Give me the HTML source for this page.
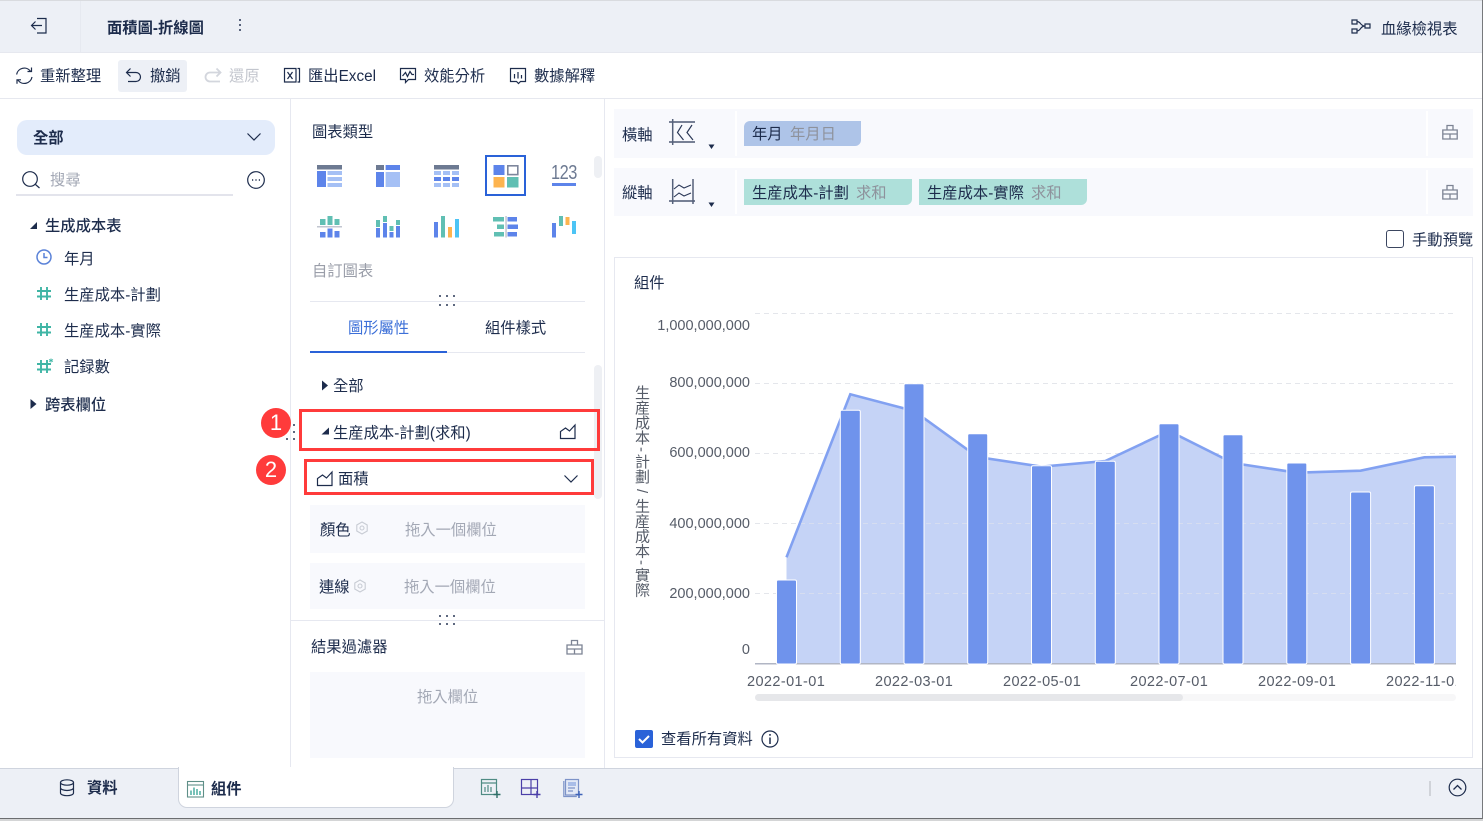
<!DOCTYPE html>
<html lang="zh-Hant"><head><meta charset="utf-8"><title>面積圖-折線圖</title>
<style>
html,body{margin:0;padding:0;background:#fff}
body{position:relative;width:1483px;height:821px;overflow:hidden;font-family:"Liberation Sans","Noto Sans CJK TC",sans-serif;font-size:15.3px;color:#1d2c4c}
.t{position:absolute;white-space:nowrap;line-height:20px;height:20px;margin-top:2px}
.t.u{margin-top:3px}
.t.n{font-size:14.5px;color:#565c68;margin-top:1px}
.x{font-size:14.5px;color:#565c68;letter-spacing:.4px}
.b{position:absolute;box-sizing:border-box}
.g{color:#a3a8b5}
.m{color:#8e929c}
svg{position:absolute;overflow:visible}
.i{fill:none;stroke:#1d2c4c;stroke-width:1.2}
.d{position:absolute;width:2px;height:2px;border-radius:1px;background:#2a3857}
</style></head><body>
<!-- header -->
<div class="b" style="left:0;top:0;width:1483px;height:53px;background:#edf0f6;border-top:1px solid #d9dbdf;border-bottom:1px solid #e6e8ef"></div>
<div class="b" style="left:80px;top:1px;width:1px;height:51px;background:#e6e9f0"></div>
<svg style="left:0;top:0" width="60" height="50" class="i" stroke-width="1.300"><path d="M37 18.500h9v14.500h-9M42 25.500H31.500M35.500 21.500l-4 4 4 4"/></svg>
<div class="t u" style="left:107px;top:16px;font-weight:700">面積圖-折線圖</div>
<div class="d" style="left:239px;top:19px"></div><div class="d" style="left:239px;top:24px"></div><div class="d" style="left:239px;top:29px"></div>
<svg style="left:1351px;top:18px" width="20" height="18" class="i"><path d="M1 2h5v4H1zM1 11h5v4H1zM14 6h5v4h-5zM6 3.500c4 0 3 4.500 8 4.500M6 13c4 0 3-5 8-5"/></svg>
<div class="t u" style="left:1381px;top:17px">血緣檢視表</div>
<!-- toolbar -->
<div class="b" style="left:0;top:98px;width:1483px;height:1px;background:#e6e8ef"></div>
<svg style="left:15px;top:66px" width="20" height="20" class="i" stroke-width="1.400"><path d="M1.600 8.500A7.800 7.800 0 0 1 15.500 5.200M17 11A7.800 7.800 0 0 1 3 14.200M16.500 1.500v4h-4M2 17.800v-4h4"/></svg>
<div class="t" style="left:40px;top:65px">重新整理</div>
<div class="b" style="left:118px;top:60px;width:69px;height:32px;background:#edf0f6;border-radius:3px"></div>
<svg style="left:125px;top:67px" width="20" height="18" class="i" stroke-width="1.300"><path d="M5.500 1.500L1.500 5.500l4 4M1.500 5.500H11a4.500 4.500 0 0 1 0 9H3"/></svg>
<div class="t" style="left:150px;top:65px">撤銷</div>
<svg style="left:204px;top:67px" width="20" height="18" fill="none" stroke="#d3d6dd" stroke-width="1.800"><path d="M12.500 1.500l4 4-4 4M16.500 5.500H6a4.500 4.500 0 0 0 0 9h10"/></svg>
<div class="t" style="left:229px;top:65px;color:#c3c6ce">還原</div>
<svg style="left:283px;top:67px" width="18" height="18" class="i" stroke-width="1.300"><path d="M1.500 1.500h11.500v13.500H1.500zM14.500 1.500h2v13.500h-2M4.500 5l5 7M9.500 5l-5 7"/></svg>
<div class="t" style="left:308px;top:65px">匯出Excel</div>
<svg style="left:399px;top:67px" width="18" height="18" class="i"><path d="M1.500 1.500h15v11h-7l-3 3v-3h-5zM3.500 9l3-3.500 2 4 2.500-5 2 3 2 0"/></svg>
<div class="t" style="left:424px;top:65px">效能分析</div>
<svg style="left:509px;top:67px" width="18" height="18" class="i"><path d="M1.500 1.500h15v13h-5l-2 2-2-2h-6zM5.500 7v4.500M9 5v6.500M12.500 8v3.500"/></svg>
<div class="t" style="left:534px;top:65px">數據解釋</div>
<!-- dividers -->
<div class="b" style="left:290px;top:99px;width:1px;height:669px;background:#e6e8f0"></div>
<div class="b" style="left:604px;top:99px;width:1px;height:669px;background:#e6e8f0"></div>
<!-- left panel -->
<div class="b" style="left:17px;top:120px;width:258px;height:35px;background:#e3ecfb;border-radius:10px"></div>
<div class="t u" style="left:33px;top:126px;font-weight:700">全部</div>
<svg style="left:246px;top:132px" width="16" height="10" class="i" stroke-width="1.400"><path d="M1.500 1.500L8 8l6.500-6.500"/></svg>
<svg style="left:21px;top:170px" width="20" height="20" class="i" stroke-width="1.400"><circle cx="9" cy="9" r="7.300"/><path d="M14.500 14.500l4 3.500"/></svg>
<div class="t g u" style="left:50px;top:168px">搜尋</div>
<div class="b" style="left:16px;top:194px;width:217px;height:2px;background:#e3e4ec"></div>
<svg style="left:247px;top:171px" width="18" height="18" class="i"><circle cx="9" cy="9" r="8.300"/><path d="M5 9h1.200M8.400 9h1.200M11.800 9H13" stroke-width="1.400"/></svg>
<svg style="left:29px;top:221px" width="9" height="9"><path d="M8 1v7H1z" fill="#1d2c4c"/></svg>
<div class="t u" style="left:45px;top:214px;font-weight:500">生成成本表</div>
<svg style="left:36px;top:249px" width="16" height="16" fill="none" stroke="#5a82d8" stroke-width="1.500"><circle cx="8" cy="8" r="7"/><path d="M8 4v4.500h3.500"/></svg>
<div class="t u" style="left:64px;top:247px">年月</div>
<svg style="left:36px;top:287px" width="16" height="14" fill="none" stroke="#3fb5a5" stroke-width="1.900"><path d="M5 0v13M11 0v13M1 4h14M1 9.500h14"/></svg>
<div class="t u" style="left:64px;top:283px">生産成本-計劃</div>
<svg style="left:36px;top:323px" width="16" height="14" fill="none" stroke="#3fb5a5" stroke-width="1.900"><path d="M5 0v13M11 0v13M1 4h14M1 9.500h14"/></svg>
<div class="t u" style="left:64px;top:319px">生産成本-實際</div>
<svg style="left:36px;top:358px" width="18" height="16" fill="none" stroke="#3fb5a5" stroke-width="1.900"><path d="M5 2v13M11 2v13M1 6h14M1 11.500h14"/><path d="M15 .5v4M13 1.500l4 2M17 1.500l-4 2" stroke-width=".9"/></svg>
<div class="t u" style="left:64px;top:355px">記録數</div>
<svg style="left:29px;top:398px" width="9" height="12"><path d="M1.500 1l6 5-6 5z" fill="#1d2c4c"/></svg>
<div class="t u" style="left:45px;top:393px;font-weight:500">跨表欄位</div>
<!-- middle panel -->
<div class="t u" style="left:312px;top:120px">圖表類型</div>
<div class="b" style="left:594px;top:156px;width:8px;height:22px;background:#eef0f4;border-radius:4px"></div>
<svg style="left:0;top:0" width="1" height="1">
<rect x="317" y="165" width="25" height="4.500" fill="#6d7a92"/><rect x="317" y="171" width="9" height="16" fill="#5d84ea"/><rect x="327.500" y="171" width="14.500" height="4" fill="#a5c0f5"/><rect x="327.500" y="177" width="14.500" height="4" fill="#a5c0f5"/><rect x="327.500" y="183" width="14.500" height="4" fill="#a5c0f5"/>
<rect x="376" y="165" width="8" height="5" fill="#6d7a92"/><rect x="385.600" y="165" width="14.400" height="5" fill="#5d84ea"/><rect x="376" y="172" width="8" height="15" fill="#5d84ea"/><rect x="385.600" y="172" width="14.400" height="15" fill="#a5c0f5"/>
<rect x="434" y="165" width="25" height="4.500" fill="#6d7a92"/>
<g fill="#a5c0f5"><rect x="434" y="171" width="7" height="4"/><rect x="443" y="171" width="7" height="4"/><rect x="452" y="171" width="7" height="4"/><rect x="434" y="183" width="7" height="4"/><rect x="443" y="183" width="7" height="4"/><rect x="452" y="183" width="7" height="4"/></g>
<g fill="#5d84ea"><rect x="434" y="177" width="7" height="4"/><rect x="443" y="177" width="7" height="4"/><rect x="452" y="177" width="7" height="4"/></g>
<rect x="486" y="156" width="39" height="39" fill="none" stroke="#2a62d8" stroke-width="2"/>
<rect x="493.500" y="165" width="11" height="10" fill="#5d84ea"/><rect x="507.800" y="165.800" width="10" height="8.800" fill="none" stroke="#7d869c" stroke-width="1.600"/><rect x="493.500" y="177" width="11" height="10.500" fill="#fdb44f"/><rect x="507" y="177" width="11.500" height="10.500" fill="#60bfb3"/>
<rect x="552" y="183" width="24" height="3" fill="#5d84ea"/>
<rect x="317" y="226" width="25" height="1.500" fill="#c2c6d0"/>
<g fill="#60bfb3"><rect x="320" y="219" width="5.500" height="6"/><rect x="327.500" y="216" width="5" height="9"/><rect x="334.500" y="219" width="5" height="6"/></g>
<g fill="#5d84ea"><rect x="320" y="232" width="5.500" height="5.500"/><rect x="327.500" y="228.500" width="5" height="9"/><rect x="334.500" y="231" width="5" height="6.500"/></g>
<g fill="#60bfb3"><rect x="376" y="220" width="4" height="7"/><rect x="383" y="216" width="4" height="6"/><rect x="389.500" y="226" width="4" height="5"/><rect x="396" y="220" width="4" height="5"/></g>
<g fill="#5d84ea"><rect x="376" y="228" width="4" height="9.500"/><rect x="383" y="223" width="4" height="14.500"/><rect x="389.500" y="232" width="4" height="5.500"/><rect x="396" y="226" width="4" height="11.500"/></g>
<rect x="434" y="222" width="4" height="15.500" fill="#5d84ea"/><rect x="441" y="216" width="4" height="21.500" fill="#60bfb3"/><rect x="448" y="227" width="4" height="10.500" fill="#fdb44f"/><rect x="455" y="219" width="4" height="18.500" fill="#4cc4f5"/>
<rect x="505.300" y="216" width="1.500" height="21.500" fill="#c2c6d0"/>
<g fill="#60bfb3"><rect x="493" y="217" width="11" height="4.500"/><rect x="497" y="224.500" width="7" height="4.500"/><rect x="494" y="232" width="10" height="4.500"/></g>
<g fill="#5d84ea"><rect x="507.500" y="217" width="9.500" height="4.500"/><rect x="507.500" y="224.500" width="10.500" height="4.500"/><rect x="507.500" y="232" width="9.500" height="4.500"/></g>
<rect x="552" y="223" width="4" height="14.500" fill="#5d84ea"/><rect x="559" y="216" width="4" height="10" fill="#60bfb3"/><rect x="565.500" y="217" width="4" height="8" fill="#fdb44f"/><rect x="572" y="221" width="4" height="13" fill="#4cc4f5"/>
</svg>
<div class="t" style="left:551px;top:161px;font-size:20px;letter-spacing:-.6px;color:#6d7a92;transform:scaleX(.82);transform-origin:0 50%">123</div>
<div class="t" style="left:312px;top:260px;color:#9a9ea9">自訂圖表</div>
<div class="b" style="left:310px;top:301px;width:275px;height:1px;background:#e6e8f0"></div>
<div class="d" style="left:439px;top:295px"></div><div class="d" style="left:446px;top:295px"></div><div class="d" style="left:453px;top:295px"></div>
<div class="d" style="left:439px;top:304px"></div><div class="d" style="left:446px;top:304px"></div><div class="d" style="left:453px;top:304px"></div>
<div class="t" style="left:348px;top:317px;color:#3d70d8">圖形屬性</div>
<div class="t" style="left:485px;top:317px">組件樣式</div>
<div class="b" style="left:310px;top:352px;width:275px;height:1px;background:#e6e8f0"></div>
<div class="b" style="left:310px;top:351px;width:137px;height:2px;background:#2a62d8"></div>
<div class="b" style="left:594px;top:365px;width:8px;height:134px;background:#eef0f4;border-radius:4px"></div>
<svg style="left:321px;top:380px" width="8" height="11"><path d="M1 .5l6 5-6 5z" fill="#1d2c4c"/></svg>
<div class="t" style="left:333px;top:375px">全部</div>
<div class="d" style="left:293px;top:424px"></div><div class="d" style="left:293px;top:431px"></div><div class="d" style="left:293px;top:438px"></div><div class="d" style="left:286px;top:438px"></div>
<div class="b" style="left:299px;top:409px;width:301px;height:42px;border:3px solid #ff3b3b"></div>
<svg style="left:321px;top:427px" width="9" height="9"><path d="M8 .5v7H.5z" fill="#1d2c4c"/></svg>
<div class="t" style="left:333px;top:422px">生産成本-計劃(求和)</div>
<svg style="left:559px;top:424px" width="18" height="16" class="i"><path d="M1.500 14.500V7.500l5-3.500 4 3 5.500-6v13.500z"/></svg>
<div class="b" style="left:304px;top:459px;width:290px;height:36px;border:3px solid #ff3b3b"></div>
<svg style="left:316px;top:471px" width="18" height="16" class="i"><path d="M1.500 14.500V7.500l5-3.500 4 3 5.500-6v13.500z"/></svg>
<div class="t" style="left:338px;top:468px">面積</div>
<svg style="left:563px;top:474px" width="16" height="10" class="i" stroke-width="1.400"><path d="M1.500 1.500L8 8l6.500-6.500"/></svg>
<svg style="left:0;top:0" width="1" height="1"><circle cx="276" cy="423" r="15" fill="#ff3b3b"/><circle cx="271" cy="470" r="15" fill="#ff3b3b"/></svg>
<div class="t" style="left:269px;top:411px;width:14px;text-align:center;color:#fff;font-size:22px">1</div>
<div class="t" style="left:264px;top:458px;width:14px;text-align:center;color:#fff;font-size:22px">2</div>
<div class="b" style="left:310px;top:505px;width:275px;height:48px;background:#f8f9fd"></div>
<div class="t u" style="left:320px;top:518px">顏色</div>
<svg style="left:355px;top:521px" width="14" height="14" fill="none" stroke="#c8ccd4" stroke-width="1.100"><path d="M7 1l5.200 3v6L7 13l-5.200-3V4z"/><circle cx="7" cy="7" r="2"/></svg>
<div class="t g u" style="left:405px;top:518px">拖入一個欄位</div>
<div class="b" style="left:310px;top:563px;width:275px;height:46px;background:#f8f9fd"></div>
<div class="t u" style="left:319px;top:575px">連線</div>
<svg style="left:353px;top:579px" width="14" height="14" fill="none" stroke="#c8ccd4" stroke-width="1.100"><path d="M7 1l5.200 3v6L7 13l-5.200-3V4z"/><circle cx="7" cy="7" r="2"/></svg>
<div class="t g u" style="left:404px;top:575px">拖入一個欄位</div>
<div class="b" style="left:291px;top:620px;width:313px;height:1px;background:#e6e8f0"></div>
<div class="d" style="left:439px;top:615px"></div><div class="d" style="left:446px;top:615px"></div><div class="d" style="left:453px;top:615px"></div>
<div class="d" style="left:439px;top:623px"></div><div class="d" style="left:446px;top:623px"></div><div class="d" style="left:453px;top:623px"></div>
<div class="t" style="left:311px;top:636px">結果過濾器</div>
<svg style="left:566px;top:639px" width="17" height="16" fill="none" stroke="#7d8494" stroke-width="1.300"><path d="M1 6h15v9H1zM5.500 6V1.500h6V6M1 10h15M8.500 10v5"/></svg>
<div class="b" style="left:310px;top:672px;width:275px;height:86px;background:#f8f9fd"></div>
<div class="t g" style="left:417px;top:686px">拖入欄位</div>
<!-- axis rows -->
<div class="b" style="left:614px;top:109px;width:859px;height:49px;background:#f8f9fd"></div>
<div class="b" style="left:614px;top:168px;width:859px;height:48px;background:#f8f9fd"></div>
<div class="b" style="left:735px;top:111px;width:2px;height:45px;background:#fff"></div>
<div class="b" style="left:735px;top:170px;width:2px;height:44px;background:#fff"></div>
<div class="b" style="left:1426px;top:111px;width:2px;height:45px;background:#fff"></div>
<div class="b" style="left:1426px;top:170px;width:2px;height:44px;background:#fff"></div>
<div class="t" style="left:622px;top:124px">橫軸</div>
<div class="t" style="left:622px;top:182px">縱軸</div>
<svg style="left:669px;top:118px" width="28" height="30" fill="none" stroke="#2a3857" stroke-width="1.200"><path d="M0 4h26M0 24h26"/><path d="M3.700 1v26" stroke="#55617a" stroke-width="1.500"/><path d="M13 7l-4.500 7.500 6 7.500M23 7l-5 7.500 6 7.500" stroke-width="1.200"/></svg>
<svg style="left:669px;top:178px" width="28" height="30" fill="none" stroke="#2a3857" stroke-width="1.200"><path d="M0 23h26"/><path d="M3.700 1v25M24 1v25" stroke="#55617a" stroke-width="1.500"/><path d="M5 11l5-4 5 3 7-3M5 19l5-4 5 3 7-3" stroke-width="1.100"/></svg>
<svg style="left:708px;top:144px" width="8" height="6"><path d="M.5.500h6L3.500 5z" fill="#1d2c4c"/></svg>
<svg style="left:708px;top:202px" width="8" height="6"><path d="M.5.500h6L3.500 5z" fill="#1d2c4c"/></svg>
<div class="b" style="left:744px;top:121px;width:117px;height:25px;background:#aec4e8;border-radius:6px 0 6px 0"></div>
<div class="t u" style="left:752px;top:122px">年月</div><div class="t m u" style="left:790px;top:122px">年月日</div>
<div class="b" style="left:744px;top:179px;width:168px;height:26px;background:#aee0da;border-radius:0 0 6px 0"></div>
<div class="t u" style="left:752px;top:181px">生産成本-計劃</div><div class="t m u" style="left:856px;top:181px">求和</div>
<div class="b" style="left:919px;top:179px;width:168px;height:26px;background:#aee0da;border-radius:0 0 6px 0"></div>
<div class="t u" style="left:927px;top:181px">生産成本-實際</div><div class="t m u" style="left:1031px;top:181px">求和</div>
<svg style="left:1442px;top:124px" width="17" height="16" fill="none" stroke="#7d8494" stroke-width="1.300"><path d="M.8 6h14.400v9H.8zM5 6V1.500h6V6M.8 10h14.400M8 10v5"/></svg>
<svg style="left:1442px;top:184px" width="17" height="16" fill="none" stroke="#7d8494" stroke-width="1.300"><path d="M.8 6h14.400v9H.8zM5 6V1.500h6V6M.8 10h14.400M8 10v5"/></svg>
<div class="b" style="left:1386px;top:230px;width:18px;height:18px;border:1px solid #3b4660;border-radius:3px"></div>
<div class="t" style="left:1412px;top:229px">手動預覽</div>
<!-- chart card -->
<div class="b" style="left:614px;top:257px;width:859px;height:501px;border:1px solid #e6e8f0"></div>
<div class="t" style="left:634px;top:272px">組件</div>
<svg style="left:0;top:0" width="1" height="1">
<defs><clipPath id="c"><rect x="755" y="300" width="701" height="366"/></clipPath></defs>
<g stroke="#e4e6eb" stroke-dasharray="5 4" stroke-width="1"><path d="M755 313.500H1456M755 383.500H1456M755 453.500H1456M755 523.500H1456M755 593.500H1456"/></g>
<g clip-path="url(#c)">
<path d="M786.500 557.300L850.300 394.300 914 411 977.700 457 1041.500 466.700 1105.300 461 1169 431 1233 463 1296.800 472.700 1360.600 470.700 1424.400 457.300 1456 456.700V664H786.500Z" fill="#c5d3f6"/>
<g fill="none" stroke="#e4e6eb" stroke-dasharray="5 4" opacity=".55"><path d="M755 523.500H1456M755 593.500H1456"/></g>
<path d="M786.500 557.300L850.300 394.300 914 411 977.700 457 1041.500 466.700 1105.300 461 1169 431 1233 463 1296.800 472.700 1360.600 470.700 1424.400 457.300 1456 456.700" fill="none" stroke="#82a1f1" stroke-width="2.600"/>
<rect x="755" y="663" width="701" height="1.500" fill="#b1b6c4"/>
<g fill="#6f93ec" stroke="#fff" stroke-width="1">
<rect x="776.500" y="580" width="20" height="84" rx="1.500"/>
<rect x="840.300" y="410.300" width="20" height="253.700" rx="1.500"/>
<rect x="904" y="383.700" width="20" height="280.300" rx="1.500"/>
<rect x="967.700" y="433.700" width="20" height="230.300" rx="1.500"/>
<rect x="1031.500" y="465.700" width="20" height="198.300" rx="1.500"/>
<rect x="1095.300" y="461.300" width="20" height="202.700" rx="1.500"/>
<rect x="1159" y="423.700" width="20" height="240.300" rx="1.500"/>
<rect x="1223" y="434.700" width="20" height="229.300" rx="1.500"/>
<rect x="1286.800" y="463" width="20" height="201" rx="1.500"/>
<rect x="1350.600" y="492" width="20" height="172" rx="1.500"/>
<rect x="1414.400" y="485.700" width="20" height="178.300" rx="1.500"/>
</g>
</g>
<rect x="755" y="694" width="701" height="7" rx="3.500" fill="#f7f7f8"/>
<rect x="755" y="694" width="428" height="7" rx="3.500" fill="#e6e7ea"/>
</svg>
<div class="t n" style="left:640px;top:315px;width:110px;text-align:right">1,000,000,000</div>
<div class="t n" style="left:640px;top:372px;width:110px;text-align:right">800,000,000</div>
<div class="t n" style="left:640px;top:442px;width:110px;text-align:right">600,000,000</div>
<div class="t n" style="left:640px;top:513px;width:110px;text-align:right">400,000,000</div>
<div class="t n" style="left:640px;top:583px;width:110px;text-align:right">200,000,000</div>
<div class="t n" style="left:640px;top:639px;width:110px;text-align:right">0</div>
<div class="t x" style="left:747px;top:670px">2022-01-01</div>
<div class="t x" style="left:875px;top:670px">2022-03-01</div>
<div class="t x" style="left:1003px;top:670px">2022-05-01</div>
<div class="t x" style="left:1130px;top:670px">2022-07-01</div>
<div class="t x" style="left:1258px;top:670px">2022-09-01</div>
<div class="t x" style="left:1386px;top:670px;width:70px;overflow:hidden">2022-11-01</div>
<div style="position:absolute;left:631px;top:385px;width:20px;line-height:20px;writing-mode:vertical-rl;white-space:nowrap;color:#565c68;font-size:15px">生産成本<span style="padding:2px 0">-</span>計劃<span style="padding:5px 0">/</span>生産成本<span style="padding:2px 0">-</span>實際</div>
<div class="b" style="left:635px;top:730px;width:18px;height:18px;background:#2a62d8;border-radius:2px"></div>
<svg style="left:635px;top:730px" width="18" height="18" fill="none" stroke="#fff" stroke-width="2"><path d="M4 9l3.500 3.500L14 6"/></svg>
<div class="t" style="left:661px;top:728px">查看所有資料</div>
<svg style="left:761px;top:730px" width="18" height="18" class="i"><circle cx="9" cy="9" r="8"/><path d="M9 7.500V14M9 4v1.800" stroke-width="1.500"/></svg>
<!-- bottom bar -->
<div class="b" style="left:0;top:768px;width:1483px;height:51px;background:#edf0f6;border-top:1px solid #cfd4de;border-bottom:1px solid #6b6d70"></div>
<div class="b" style="left:0;top:819px;width:1483px;height:2px;background:#d4d5d6"></div>
<div class="b" style="left:1482px;top:0;width:1px;height:819px;background:#77797c"></div>
<svg style="left:59px;top:779px" width="16" height="18" class="i" stroke-width="1.300"><ellipse cx="8" cy="3.500" rx="6.500" ry="2.700"/><path d="M1.500 3.500v10.500c0 1.500 3 2.700 6.500 2.700s6.500-1.200 6.500-2.700V3.500M1.500 8.800c0 1.500 3 2.700 6.500 2.700s6.500-1.200 6.500-2.700"/></svg>
<div class="t" style="left:87px;top:777px;font-weight:700">資料</div>
<div class="b" style="left:178px;top:767px;width:276px;height:41px;background:#fff;border:1px solid #cfd4de;border-top:0;border-radius:0 0 9px 9px"></div>
<svg style="left:187px;top:781px" width="18" height="18" fill="none" stroke="#5f8f88" stroke-width="1.100"><rect x=".5" y=".5" width="16" height="15.500"/><path d="M.5 4h16"/><path d="M4 14V9.500M7 14V6.500M10 14V8M13 14V10" stroke="#3fa79a" stroke-width="1.400"/></svg>
<div class="t" style="left:211px;top:778px;font-weight:700">組件</div>
<svg style="left:481px;top:779px" width="20" height="20" fill="none" stroke="#4f8b84" stroke-width="1.200"><rect x=".5" y=".5" width="15" height="15"/><path d="M.5 4h15M4 13V8M7 13V6M10 13V8"/><path d="M16 12v7M12.500 15.500h7" stroke="#2f6f68" stroke-width="1.400"/></svg>
<svg style="left:521px;top:779px" width="20" height="20" fill="none" stroke="#4b3fa8" stroke-width="1.200"><rect x=".5" y=".5" width="16" height="15"/><path d="M.5 9h16M10 .5v15"/><path d="M16 12v7M12.500 15.500h7" stroke-width="1.400"/></svg>
<svg style="left:563px;top:779px" width="20" height="20" fill="none" stroke="#7d93c8" stroke-width="1.200"><rect x="2.500" y=".5" width="13" height="15.500" fill="#e3e9f6"/><path d="M.8 2v15.500h13M5 9h7M5 12h5"/><rect x="5" y="3" width="8" height="4" fill="#a9bde8" stroke="none"/><path d="M16 12v7M12.500 15.500h7" stroke="#3e63b8" stroke-width="1.400"/></svg>
<div class="b" style="left:1429px;top:781px;width:2px;height:15px;background:#d0d3d9"></div>
<svg style="left:1448px;top:778px" width="20" height="20" class="i"><circle cx="9.500" cy="9.500" r="8.300"/><path d="M5.500 11.500l4-4 4 4" stroke-width="1.300"/></svg>
</body></html>
